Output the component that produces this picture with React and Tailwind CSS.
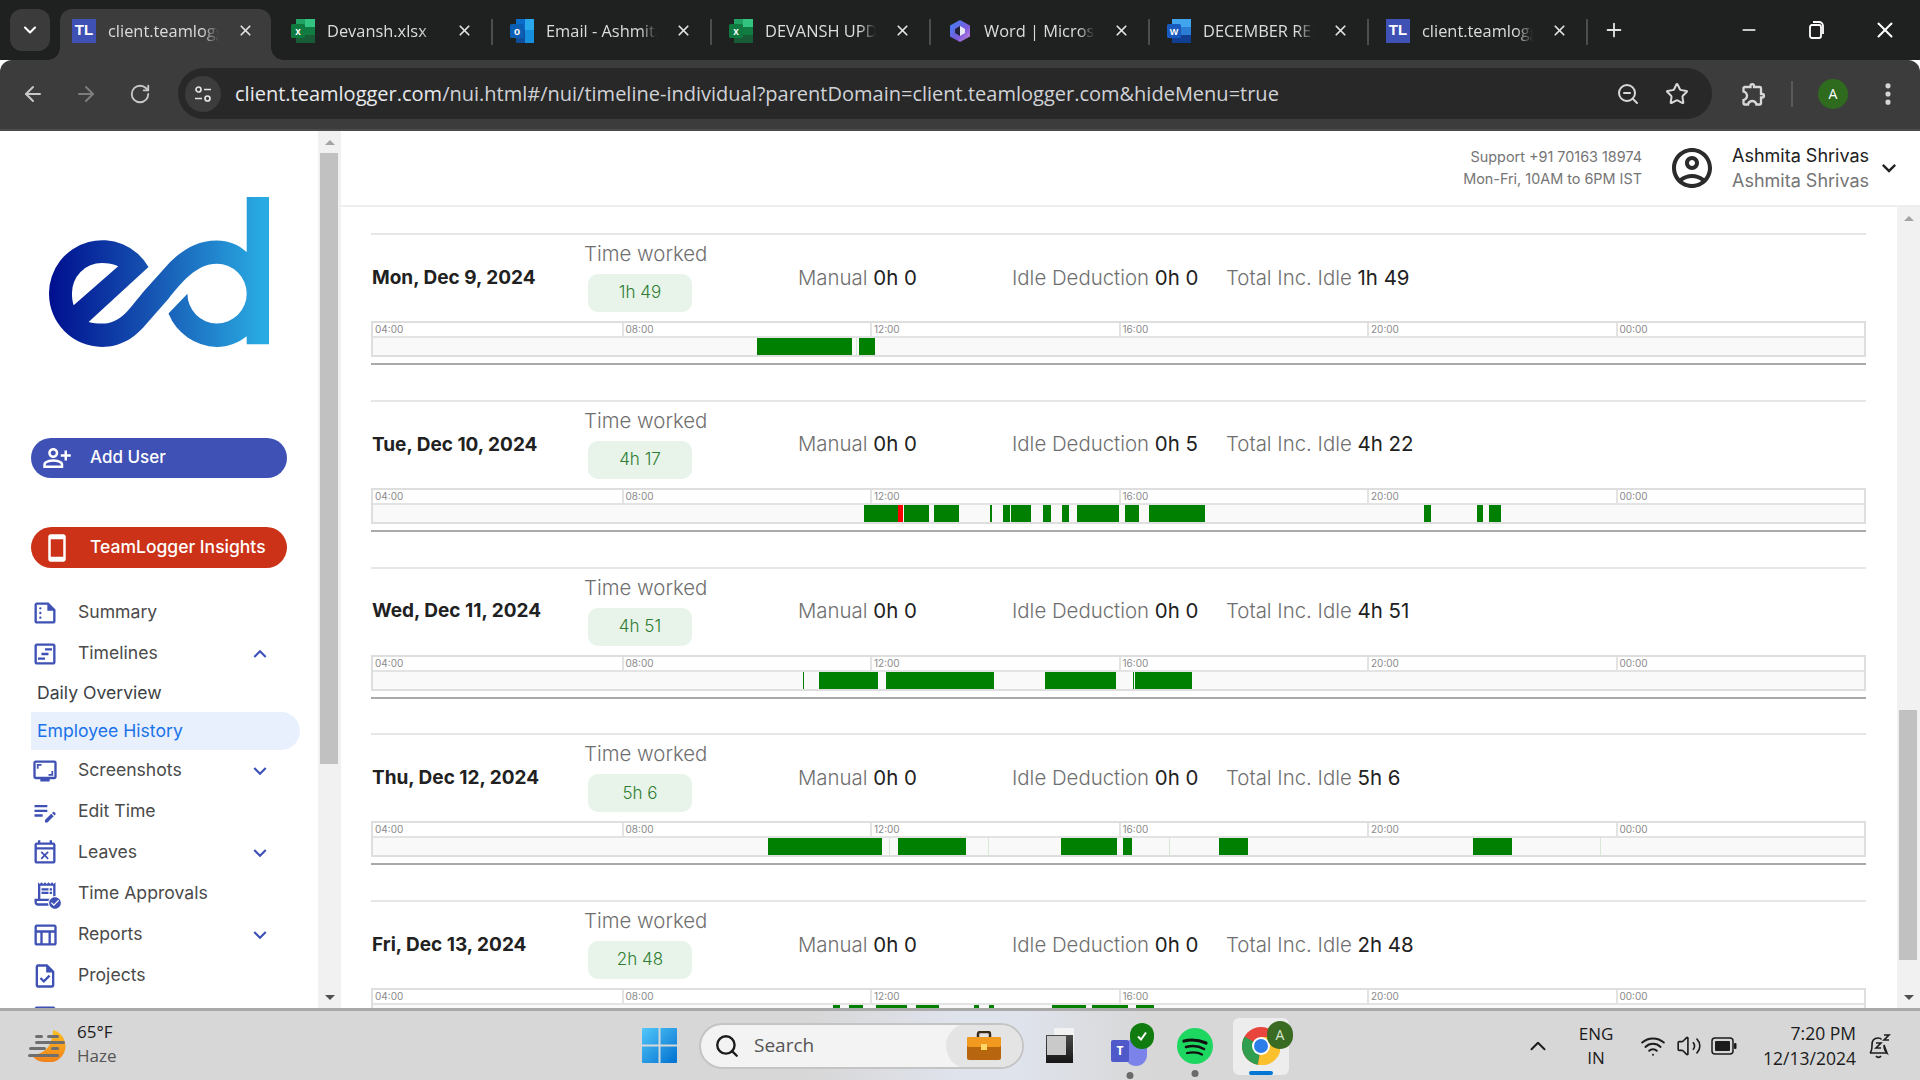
import React from "react";
import { ArrowLeft, ArrowRight, RotateCw, Star, ZoomOut, EllipsisVertical, X, Plus, Minus, ChevronDown, ChevronUp, Search, Wifi, Volume2 } from "lucide-react";
import {
  MdOutlineSummarize, MdOutlineViewTimeline, MdOutlineScreenshotMonitor, MdOutlineEditNote, MdOutlineEventBusy,
  MdOutlineReceiptLong, MdCheckCircle, MdOutlineTableChart, MdOutlineTask, MdOutlinePersonAddAlt, MdOutlineStayCurrentPortrait,
  MdKeyboardArrowDown, MdKeyboardArrowUp, MdOutlineExtension, MdOutlineArticle,
} from "react-icons/md";

// inner track of the timeline, in page pixels (bars below are given in page x)
const CHART_LEFT = 373;
const CHART_WIDTH = 1491;

const days = [
  { date: "Mon, Dec 9, 2024", worked: "1h 49", idle: "0h 0", total: "1h 49", bars: [[757, 851.5], [859, 875.5]], faint: [[856, 857]] },
  {
    date: "Tue, Dec 10, 2024", worked: "4h 17", idle: "0h 5", total: "4h 22",
    bars: [[864, 897.5], [903.5, 928.5], [934, 958.5], [990, 992.5], [1003, 1010], [1011, 1031], [1043, 1051], [1062, 1069], [1077, 1119], [1125, 1139], [1149, 1205], [1424, 1431], [1477.5, 1483], [1489, 1501]],
    red: [[897.5, 903.5]], faint: [],
  },
  { date: "Wed, Dec 11, 2024", worked: "4h 51", idle: "0h 0", total: "4h 51", bars: [[803, 804.5], [818.5, 878], [885.5, 994], [1044.5, 1116], [1133, 1134], [1134.5, 1192]], faint: [] },
  { date: "Thu, Dec 12, 2024", worked: "5h 6", idle: "0h 0", total: "5h 6", bars: [[767.5, 882], [898, 965.5], [1061, 1117], [1123, 1132], [1219, 1248], [1473, 1512.5]], faint: [[889, 889.6], [987.5, 988], [1169, 1169.6], [1600, 1600.6]] },
  { date: "Fri, Dec 13, 2024", worked: "2h 48", idle: "0h 0", total: "2h 48", bars: [[832.5, 840], [848.5, 863], [876, 907], [916, 939], [973.5, 979], [989, 994], [1052, 1086], [1091.5, 1128], [1135.5, 1153.5]], faint: [] },
];

const ExcelIcon = () => (
  <svg width="24" height="24" viewBox="0 0 24 24">
    <rect x="5" y="0" width="19" height="8" fill="#21a366" />
    <rect x="5" y="8" width="19" height="8" fill="#107c41" />
    <rect x="5" y="16" width="19" height="8" fill="#185c37" />
    <rect x="14" y="0" width="10" height="8" fill="#33c481" />
    <rect x="0" y="5" width="14" height="14" rx="1.5" fill="#0f7a3f" />
    <text x="7" y="16" textAnchor="middle" fontSize="10" fontWeight="700" fill="#fff" fontFamily="Liberation Sans">x</text>
  </svg>
);

const OutlookIcon = () => (
  <svg width="24" height="24" viewBox="0 0 24 24">
    <rect x="6" y="0" width="18" height="11" fill="#0a6cc9" />
    <rect x="15" y="0" width="9" height="11" fill="#28a8ea" />
    <rect x="6" y="11" width="18" height="13" rx="1" fill="#0f4f9e" />
    <rect x="15" y="11" width="9" height="13" fill="#1490df" />
    <rect x="0" y="5" width="14" height="14" rx="1.5" fill="#0a5fb4" />
    <text x="7" y="16" textAnchor="middle" fontSize="10" fontWeight="700" fill="#fff" fontFamily="Liberation Sans">o</text>
  </svg>
);

const WordIcon = () => (
  <svg width="24" height="24" viewBox="0 0 24 24">
    <rect x="5" y="0" width="19" height="8" fill="#41a5ee" />
    <rect x="5" y="8" width="19" height="8" fill="#2b7cd3" />
    <rect x="5" y="16" width="19" height="8" fill="#103f91" />
    <rect x="0" y="5" width="14" height="14" rx="1.5" fill="#185abd" />
    <text x="7" y="16" textAnchor="middle" fontSize="9" fontWeight="700" fill="#fff" fontFamily="Liberation Sans">W</text>
  </svg>
);

const CopilotIcon = () => (
  <svg width="24" height="24" viewBox="0 0 24 24">
    <defs>
      <linearGradient id="cp" x1="0" y1="0" x2="1" y2="1">
        <stop offset="0" stopColor="#3b82f6" />
        <stop offset="0.6" stopColor="#7c5cdb" />
        <stop offset="1" stopColor="#d08adf" />
      </linearGradient>
    </defs>
    <path d="M12 1l10 5.5v11L12 23 2 17.5v-11z" fill="url(#cp)" />
    <path d="M12 7l5 3v4l-5 3z" fill="#e8e8f5" />
    <path d="M12 7L7 10v4l5 3z" fill="#24223a" />
  </svg>
);

const TlIcon = () => (
  <span className="flex items-center justify-center w-6 h-6 bg-[#3f51b5] text-white text-[15px] font-bold font-['Liberation_Sans',sans-serif]">TL</span>
);

const tabs = [
  { icon: <TlIcon />, title: "client.teamlogger.com", active: true },
  { icon: <ExcelIcon />, title: "Devansh.xlsx", sep: true },
  { icon: <OutlookIcon />, title: "Email - Ashmita Shrivas", sep: true },
  { icon: <ExcelIcon />, title: "DEVANSH UPDATE", sep: true },
  { icon: <CopilotIcon />, title: "Word | Microsoft 365", sep: true },
  { icon: <WordIcon />, title: "DECEMBER REPORT", sep: true },
  { icon: <TlIcon />, title: "client.teamlogger.com", sep: true },
];

const BrowserTab = ({ tab }) => (
  <div className={`relative flex items-center h-[51px] pl-3 pb-[8px] ${tab.active ? "bg-[#3c3c3c] rounded-t-[12px] w-[211px] mr-2" : "w-[219px]"}`}>
    {tab.icon}
    <span className="ml-3 pt-[1px] w-[111px] overflow-hidden whitespace-nowrap text-[16.4px] text-[#dcdcdc] [mask-image:linear-gradient(90deg,#000_85%,transparent)]">{tab.title}</span>
    <X className="ml-[18px] w-[17px] h-[17px] text-[#e3e3e3]" strokeWidth={2.4} />
    {tab.sep && <span className="absolute right-[5px] top-[10px] w-[2px] h-[26px] bg-[#4d4d4d]" />}
    {tab.active && <span className="absolute left-[-12px] bottom-0 w-3 h-3 bg-[radial-gradient(circle_at_0_0,transparent_11.5px,#3c3c3c_12px)]" />}
    {tab.active && <span className="absolute right-[-12px] bottom-0 w-3 h-3 bg-[radial-gradient(circle_at_100%_0,transparent_11.5px,#3c3c3c_12px)]" />}
  </div>
);

const BrowserChrome = () => (
  <div className="shrink-0 font-['Open_Sans',sans-serif]">
    <div className="flex items-end h-[60px] bg-[#1f2120]">
      <div className="flex items-center justify-center ml-[10px] mr-[10px] mb-[9px] w-10 h-[42px] rounded-[12px] bg-[#3b3b3b]">
        <ChevronDown className="w-5 h-5 text-white" strokeWidth={2.5} />
      </div>
      {tabs.map((tab, i) => <BrowserTab key={i} tab={tab} />)}
      <Plus className="ml-[10px] mb-[19px] w-[22px] h-[22px] text-[#e3e3e3]" strokeWidth={2} />
      <Minus className="ml-[114px] mb-[20px] w-5 h-5 text-white" strokeWidth={1.8} />
      <svg className="ml-[47px] mb-[20px]" width="20" height="20" viewBox="0 0 20 20" fill="none" stroke="#fff" strokeWidth="1.8">
        <rect x="4" y="5" width="11" height="13" rx="2" />
        <path d="M7 2h6a4 4 0 0 1 4 4v8" />
      </svg>
      <X className="ml-[46px] mb-[17px] w-[26px] h-[26px] text-white" strokeWidth={1.8} />
    </div>
    <div className="flex items-center h-[71px] pb-[2px] bg-[#3c3c3c] border-b-2 border-[#4a4a4a] rounded-t-[12px]">
      <ArrowLeft className="ml-[21px] w-6 h-6 text-[#c8c8c8]" strokeWidth={2} />
      <ArrowRight className="ml-[29px] w-6 h-6 text-[#7d7d7d]" strokeWidth={2} />
      <RotateCw className="ml-[31px] w-[22px] h-[22px] text-[#c8c8c8]" strokeWidth={2} />
      <div className="flex items-center ml-[27px] w-[1534px] h-[51px] rounded-full bg-[#282828]">
        <div className="flex items-center justify-center ml-[7px] w-9 h-9 rounded-full bg-[#3c3c3c]">
          <svg width="20" height="20" viewBox="0 0 20 20" fill="none" stroke="#e3e3e3" strokeWidth="1.7">
            <circle cx="5.5" cy="5.5" r="2.5" />
            <path d="M11 5.5h7M2 14.5h7" />
            <circle cx="14.5" cy="14.5" r="2.5" />
          </svg>
        </div>
        <span className="ml-[14px] w-[1376px] pt-[1px] whitespace-nowrap text-[20px] text-[#e8eaed]">
          client.teamlogger.com<span className="text-[#d0d2d6]">/nui.html#/nui/timeline-individual?parentDomain=client.teamlogger.com&hideMenu=true</span>
        </span>
        <ZoomOut className="ml-[5px] w-[24px] h-[24px] text-[#d8d8d8]" strokeWidth={2} />
        <Star className="ml-[25px] w-[24px] h-[24px] text-[#d8d8d8]" strokeWidth={2} />
      </div>
      <MdOutlineExtension className="ml-[28px] w-[28px] h-[28px] text-[#d8d8d8]" />
      <span className="ml-[23px] w-[2px] h-[26px] bg-[#5a5a5a]" />
      <span className="flex items-center justify-center ml-[25px] w-[30px] h-[30px] rounded-full bg-[#2f6b1f] text-white text-[14px]">A</span>
      <EllipsisVertical className="ml-[26px] w-7 h-7 text-[#d8d8d8]" strokeWidth={2.4} />
    </div>
  </div>
);

const Logo = () => (
  <svg className="ml-[49px]" width="220" height="150" viewBox="146 200 661 450">
    <defs>
      <linearGradient id="ed" gradientUnits="userSpaceOnUse" x1="146" y1="0" x2="790" y2="0">
        <stop offset="0" stopColor="#000f8f" />
        <stop offset="0.45" stopColor="#1550b0" />
        <stop offset="1" stopColor="#29abe2" />
      </linearGradient>
    </defs>
    <path
      fillRule="evenodd"
      fill="url(#ed)"
      d="M445 410 A160 160 0 0 0 146 490 A160 160 0 0 0 305 650 C365 650 405 620 435 585 L505 505 C545 455 590 400 650 400 A90 90 0 0 1 650 580 A88 90 0 0 1 562 490 L505 550 A160 160 0 0 0 650 650 C685 650 715 638 740 618 L740 642 L807 642 L807 200 L740 200 L740 365 C715 342 685 330 650 330 C590 330 545 360 510 395 L435 478 C390 530 365 580 305 580 C290 580 277 578 265 575 Z M354 408 C340 401 322 398 305 398 A90 90 0 0 0 215 490 C215 503 217 515 220 525 Z"
    />
  </svg>
);

const navItems = [
  { label: "Summary", icon: <MdOutlineSummarize /> },
  { label: "Timelines", icon: <MdOutlineViewTimeline />, arrow: "up" },
  { label: "Daily Overview", sub: true },
  { label: "Employee History", sub: true, active: true },
  { label: "Screenshots", icon: <MdOutlineScreenshotMonitor />, arrow: "down" },
  { label: "Edit Time", icon: <MdOutlineEditNote /> },
  { label: "Leaves", icon: <MdOutlineEventBusy />, arrow: "down" },
  {
    label: "Time Approvals",
    icon: (
      <span className="relative block w-7 h-7">
        <MdOutlineReceiptLong />
        <MdCheckCircle className="absolute right-[-3px] bottom-[-2px] w-[14px] h-[14px] bg-white rounded-full" />
      </span>
    ),
  },
  { label: "Reports", icon: <MdOutlineTableChart />, arrow: "down" },
  { label: "Projects", icon: <MdOutlineTask /> },
];

const NavRow = ({ item }) => {
  if (item.sub) {
    return (
      <div className={`flex items-center h-[38px] pl-[6px] w-[269px] text-[17.6px] rounded-r-full ${item.active ? "bg-[#e8f0fe] text-[#1a73e8]" : "text-[#3c4043]"}`}>
        {item.label}
      </div>
    );
  }
  return (
    <div className="flex items-center h-[41px] text-[17.6px] text-[#4a4a4a]">
      <span className="flex items-center justify-center w-7 h-7 text-[28px] text-[#3f51b5]">{item.icon}</span>
      <span className="ml-[19px] w-[169px]">{item.label}</span>
      {item.arrow === "up" && <MdKeyboardArrowUp className="w-[26px] h-[26px] text-[#3f51b5]" />}
      {item.arrow === "down" && <MdKeyboardArrowDown className="w-[26px] h-[26px] text-[#3f51b5]" />}
    </div>
  );
};

const Scrollbar = ({ thumbTop, thumbHeight }) => (
  <div className="relative flex flex-col justify-between shrink-0 w-[23px] bg-[#f1f1f1]">
    <div className="flex justify-center pt-[9px]">
      <span className="w-0 h-0 border-x-[5px] border-x-transparent border-b-[5px] border-b-[#a3a3a3]" />
    </div>
    <div className="absolute left-[2px] right-[3px] bg-[#c1c1c1]" style={{ top: thumbTop, height: thumbHeight }} />
    <div className="flex justify-center pb-[8px]">
      <span className="w-0 h-0 border-x-[5px] border-x-transparent border-t-[5px] border-t-[#505050]" />
    </div>
  </div>
);

const Sidebar = () => (
  <>
    <aside className="shrink-0 w-[318px] overflow-hidden bg-white font-['Inter',sans-serif]">
      <div className="pt-[66px]">
        <Logo />
      </div>
      <button className="flex items-center mt-[91px] ml-[31px] w-[256px] h-10 rounded-full bg-[#3f51b5] text-white text-[17px] font-medium">
        <MdOutlinePersonAddAlt className="ml-[11px] w-[30px] h-[30px]" />
        <span className="ml-[18px]">Add User</span>
      </button>
      <button className="flex items-center mt-[49px] ml-[31px] w-[256px] h-[41px] rounded-full bg-[#cb3218] text-white text-[17.5px] font-medium">
        <MdOutlineStayCurrentPortrait className="ml-[11px] w-[30px] h-[30px]" />
        <span className="ml-[18px]">TeamLogger Insights</span>
      </button>
      <nav className="mt-[24px] pl-[31px]">
        {navItems.map((item) => <NavRow key={item.label} item={item} />)}
        <div className="flex items-center h-[41px]">
          <MdOutlineArticle className="w-7 h-7 text-[#3f51b5]" />
        </div>
      </nav>
    </aside>
    <Scrollbar thumbTop={22} thumbHeight={611} />
  </>
);

const Timeline = ({ day }) => {
  const place = ([from, to]) => ({
    left: `${((from - CHART_LEFT) / CHART_WIDTH) * 100}%`,
    width: `${((to - from) / CHART_WIDTH) * 100}%`,
  });
  return (
    <div className="w-[1495px] border-2 border-[#dedede]">
      <div className="grid grid-cols-6 h-[13px] bg-white border-b-2 border-[#e3e3e3] box-content">
        {["04:00", "08:00", "12:00", "16:00", "20:00", "00:00"].map((t, i) => (
          <div key={t} className={`pl-[2px] text-[10px] leading-[13px] text-[#8a8a8a] ${i ? "border-l-2 border-[#e3e3e3]" : ""}`}>{t}</div>
        ))}
      </div>
      <div className="relative h-[17px] bg-[#f9f9f9]">
        {(day.faint || []).map((b, i) => <div key={i} className="absolute top-0 bottom-0 bg-[#d6e8d6]" style={place(b)} />)}
        {day.bars.map((b, i) => <div key={i} className="absolute top-0 bottom-0 bg-[#008000]" style={place(b)} />)}
        {(day.red || []).map((b, i) => <div key={i} className="absolute top-0 bottom-0 bg-[#ff0000]" style={place(b)} />)}
      </div>
    </div>
  );
};

const Stat = ({ label, value }) => (
  <div className="whitespace-nowrap text-[20.4px] font-light text-[#6f6f6f]">
    {label} <span className="font-normal text-[#212121]">{value}</span>
  </div>
);

const DayRow = ({ day }) => (
  <section className="shrink-0 w-[1495px] border-t-2 border-[#e6e6e6]">
    <div className="grid grid-cols-[213px_214px_214px_214px_1fr] items-center h-[86px]">
      <div className="pl-[1px] text-[19px] font-bold text-[#212121] whitespace-nowrap">{day.date}</div>
      <div className="self-start pt-[4px]">
        <div className="h-[30px] text-[20.4px] leading-[30px] font-light text-[#6f6f6f] whitespace-nowrap">Time worked</div>
        <div className="flex items-center justify-center mt-[5px] ml-[4px] w-[104px] h-[38px] rounded-[10px] bg-[#e8f3e9] text-[17px] text-[#2e7d32] font-light">{day.worked}</div>
      </div>
      <Stat label="Manual" value="0h 0" />
      <Stat label="Idle Deduction" value={day.idle} />
      <Stat label="Total Inc. Idle" value={day.total} />
    </div>
    <Timeline day={day} />
    <div className="mt-[6px] h-[2px] bg-[#a9a9a9]" />
  </section>
);

const Header = () => (
  <header className="flex items-center justify-end h-[76px] shrink-0 border-b-2 border-[#eeeeee] bg-white">
    <div className="text-right text-[14.4px] leading-[22px] text-[#757575]">
      <div>Support +91 70163 18974</div>
      <div>Mon-Fri, 10AM to 6PM IST</div>
    </div>
    <svg className="ml-[26px]" width="48" height="48" viewBox="0 0 24 24" fill="#2b2b2b">
      <path d="M12 2C6.48 2 2 6.48 2 12s4.48 10 10 10 10-4.48 10-10S17.52 2 12 2zM7.35 18.5C8.66 17.56 10.26 17 12 17s3.34.56 4.65 1.5c-1.31.94-2.91 1.5-4.65 1.5s-3.34-.56-4.65-1.5zm10.79-1.38C16.45 15.8 14.32 15 12 15s-4.45.8-6.14 2.12C4.7 15.73 4 13.95 4 12c0-4.42 3.58-8 8-8s8 3.58 8 8c0 1.95-.7 3.73-1.86 5.12z" />
      <path d="M12 6c-1.93 0-3.5 1.57-3.5 3.5S10.07 13 12 13s3.5-1.57 3.5-3.5S13.93 6 12 6zm0 5c-.83 0-1.5-.67-1.5-1.5S11.17 8 12 8s1.5.67 1.5 1.5S12.83 11 12 11z" />
    </svg>
    <div className="ml-[16px] w-[137px] text-[18px] leading-[25px] whitespace-nowrap">
      <div className="text-[#212121]">Ashmita Shrivas</div>
      <div className="text-[#757575]">Ashmita Shrivas</div>
    </div>
    <MdKeyboardArrowDown className="ml-[6px] mr-[17px] w-[28px] h-[28px] text-[#222]" />
  </header>
);

const Main = () => (
  <main className="flex flex-col flex-1 min-w-0 bg-white font-['Inter',sans-serif]">
    <Header />
    <div className="flex flex-1 min-h-0">
      <div className="flex-1 min-w-0 overflow-hidden pl-[30px] pt-[26px]">
        <div className="flex flex-col gap-[34.8px]">
          {days.map((d) => <DayRow key={d.date} day={d} />)}
        </div>
      </div>
      <Scrollbar thumbTop={503} thumbHeight={250} />
    </div>
  </main>
);

const WeatherIcon = () => (
  <svg width="38" height="33" viewBox="0 0 38 33">
    <defs>
      <linearGradient id="sun" x1="0" y1="0" x2="0" y2="1">
        <stop offset="0" stopColor="#fbbf24" />
        <stop offset="1" stopColor="#f0801a" />
      </linearGradient>
    </defs>
    <path d="M25 1a16 16 0 0 1-8 32c-6 0-11-3-14-8 4 1 9 0 13-3 6-4 9-13 9-21z" fill="url(#sun)" />
    <g fill="#6f6f6f">
      <rect x="7" y="6" width="8" height="3" rx="1.5" />
      <rect x="19" y="6" width="12" height="3" rx="1.5" />
      <rect x="7" y="12" width="30" height="3" rx="1.5" />
      <rect x="1" y="18" width="17" height="3" rx="1.5" />
      <rect x="23" y="18" width="8" height="3" rx="1.5" />
      <rect x="0" y="25" width="31" height="3" rx="1.5" />
    </g>
  </svg>
);

const WindowsLogo = () => (
  <svg width="35" height="35" viewBox="0 0 35 35">
    <defs>
      <linearGradient id="win" x1="0" y1="0" x2="1" y2="1">
        <stop offset="0" stopColor="#52c7fa" />
        <stop offset="1" stopColor="#0070cf" />
      </linearGradient>
    </defs>
    <path fill="url(#win)" d="M1 0h15.5v16.5H0V1a1 1 0 0 1 1-1zm17.5 0H34a1 1 0 0 1 1 1v15.5H18.500zM0 18.500h16.500V35H1a1 1 0 0 1-1-1zm18.500 0H35V34a1 1 0 0 1-1 1H18.500z" />
  </svg>
);

const ChromeIcon = () => (
  <svg width="38" height="38" viewBox="0 0 38 38">
    <circle cx="19" cy="19" r="19" fill="#e8453c" />
    <path d="M19 19L2.500 9.500A19 19 0 0 0 16 37.800z" fill="#2f9e4f" />
    <path d="M19 10h17.500A19 19 0 0 1 16 37.800L19 19z" fill="#fbc02d" />
    <circle cx="19" cy="19" r="9" fill="#fff" />
    <circle cx="19" cy="19" r="7" fill="#2b7de9" />
  </svg>
);

const Taskbar = () => (
  <footer className="relative z-10 flex items-center shrink-0 h-[72px] border-t-[3px] border-[#a9a9a9] bg-[linear-gradient(90deg,#d7d7d7_0,#d7d7d7_42%,#dfe3ec_50%,#dfe3ec_53%,#d7d7d7_60%,#d7d7d7_100%)] font-['Open_Sans',sans-serif]">
    <div className="flex items-center w-[642px] pl-[28px]">
      <WeatherIcon />
      <div className="ml-[11px] pb-[4px] text-[17px] leading-[24px]">
        <div className="text-[#1c1c1c]">65°F</div>
        <div className="text-[#555]">Haze</div>
      </div>
    </div>
    <WindowsLogo />
    <div className="flex items-center ml-[22px] w-[325px] h-[46px] rounded-full bg-[#f3f3f3] border-2 border-[#c4c4c4] overflow-hidden">
      <Search className="ml-[13px] w-[26px] h-[26px] text-[#1c1c1c]" strokeWidth={2.2} />
      <span className="ml-[14px] w-[192px] text-[19px] text-[#555]">Search</span>
      <div className="flex items-center justify-center w-[76px] h-[46px] rounded-l-full bg-[#e4e4e4]">
        <svg width="36" height="30" viewBox="0 0 36 30">
          <path d="M12 6V3a2 2 0 0 1 2-2h8a2 2 0 0 1 2 2v3" fill="none" stroke="#3a2a16" strokeWidth="2.500" />
          <rect x="1" y="6" width="34" height="23" rx="2" fill="#b8650f" />
          <rect x="1" y="6" width="34" height="10" rx="2" fill="#f29a1f" />
          <rect x="15" y="13" width="6" height="6" fill="#ffd766" />
        </svg>
      </div>
    </div>
    <div className="relative ml-[22px] w-[28px] h-[35px]">
      <div className="absolute right-0 top-0 w-[20px] h-[26px] bg-[#f2f2f2]" />
      <div className="absolute left-0 bottom-0 w-[27px] h-[28px] bg-[linear-gradient(180deg,#4b4b4b,#161616)]" />
      <div className="absolute right-[8px] top-[8px] w-[19px] h-[19px] bg-[#c9c9c9]" />
    </div>
    <div className="relative ml-[37px] w-[38px] h-[40px]">
      <span className="absolute right-[2px] top-[12px] w-[22px] h-[28px] rounded-full bg-[#7b83eb]" />
      <span className="absolute left-0 top-[14px] flex items-center justify-center w-[18px] h-[22px] rounded-[2px] bg-[#5059c9] text-white text-[12px] font-bold">T</span>
      <span className="absolute right-[-5px] top-[-3px] flex items-center justify-center w-6 h-[26px] rounded-full bg-[#107c10] text-white">
        <svg width="12" height="12" viewBox="0 0 12 12" fill="none" stroke="#fff" strokeWidth="2"><path d="M2 6.500l3 3 5-7" /></svg>
      </span>
      <span className="absolute left-1/2 -translate-x-1/2 bottom-[-13px] w-[7px] h-[7px] rounded-full bg-[#6a6a6a]" />
    </div>
    <div className="relative ml-[28px] w-[36px] h-[38px]">
      <svg width="36" height="38" viewBox="0 0 36 38">
        <circle cx="18" cy="19" r="18" fill="#1ed760" />
        <g fill="none" stroke="#111" strokeLinecap="round">
          <path d="M7 14c8-2 15-1 22 2" strokeWidth="3.200" />
          <path d="M9 20c6-1.500 13-1 18 2" strokeWidth="2.600" />
          <path d="M10 26c6-1 11-1 15 1.500" strokeWidth="2.200" />
        </g>
      </svg>
      <span className="absolute left-1/2 -translate-x-1/2 bottom-[-12px] w-[7px] h-[7px] rounded-full bg-[#6a6a6a]" />
    </div>
    <div className="relative flex items-center justify-center ml-[20px] mt-[1px] w-[56px] h-[57px] rounded-[6px] bg-[#ededed]">
      <ChromeIcon />
      <span className="absolute left-[34px] top-[3px] flex items-center justify-center w-[26px] h-[28px] rounded-full bg-[#3a6b22] text-[#d8e6d0] text-[14px]">A</span>
      <span className="absolute left-[16px] bottom-0 w-[24px] h-[4px] rounded-full bg-[#0078d4]" />
    </div>
    <ChevronUp className="ml-[236px] w-[26px] h-[26px] text-[#1c1c1c]" strokeWidth={1.8} />
    <div className="ml-[23px] w-[44px] text-center text-[17px] leading-[24px] text-[#1c1c1c]">
      <div>ENG</div>
      <div>IN</div>
    </div>
    <Wifi className="ml-[22px] w-[26px] h-[26px] text-[#1c1c1c]" strokeWidth={1.8} />
    <Volume2 className="ml-[10px] w-[26px] h-[26px] text-[#1c1c1c]" strokeWidth={1.5} />
    <svg className="ml-[9px]" width="26" height="18" viewBox="0 0 26 18">
      <rect x="1" y="1" width="21" height="16" rx="3" fill="none" stroke="#1c1c1c" strokeWidth="1.500" />
      <rect x="4" y="4" width="15" height="10" rx="1" fill="#1c1c1c" />
      <rect x="23" y="6" width="2.500" height="6" rx="1" fill="#1c1c1c" />
    </svg>
    <div className="ml-[12px] w-[107px] text-right text-[17.5px] leading-[25px] text-[#1c1c1c] whitespace-nowrap">
      <div>7:20 PM</div>
      <div>12/13/2024</div>
    </div>
    <svg className="ml-[11px]" width="24" height="28" viewBox="0 0 24 28" fill="none" stroke="#1c1c1c" strokeWidth="1.600">
      <path d="M3 21c2-2 2-4 2-8s2-7 6-7c2 0 3 .5 3.500 1.500M17 13c0 4 .5 6 3 8z" />
      <path d="M3 21h17M9 24a3 3 0 0 0 5 0M9 11h5l-5 5h5M17 3h5l-5 5h5" />
    </svg>
  </footer>
);

export default function App() {
  return (
    <div className="flex flex-col w-[1920px] h-[1080px] overflow-hidden bg-white">
      <BrowserChrome />
      <div className="flex flex-1 min-h-0 overflow-hidden">
        <Sidebar />
        <Main />
      </div>
      <Taskbar />
    </div>
  );
}
